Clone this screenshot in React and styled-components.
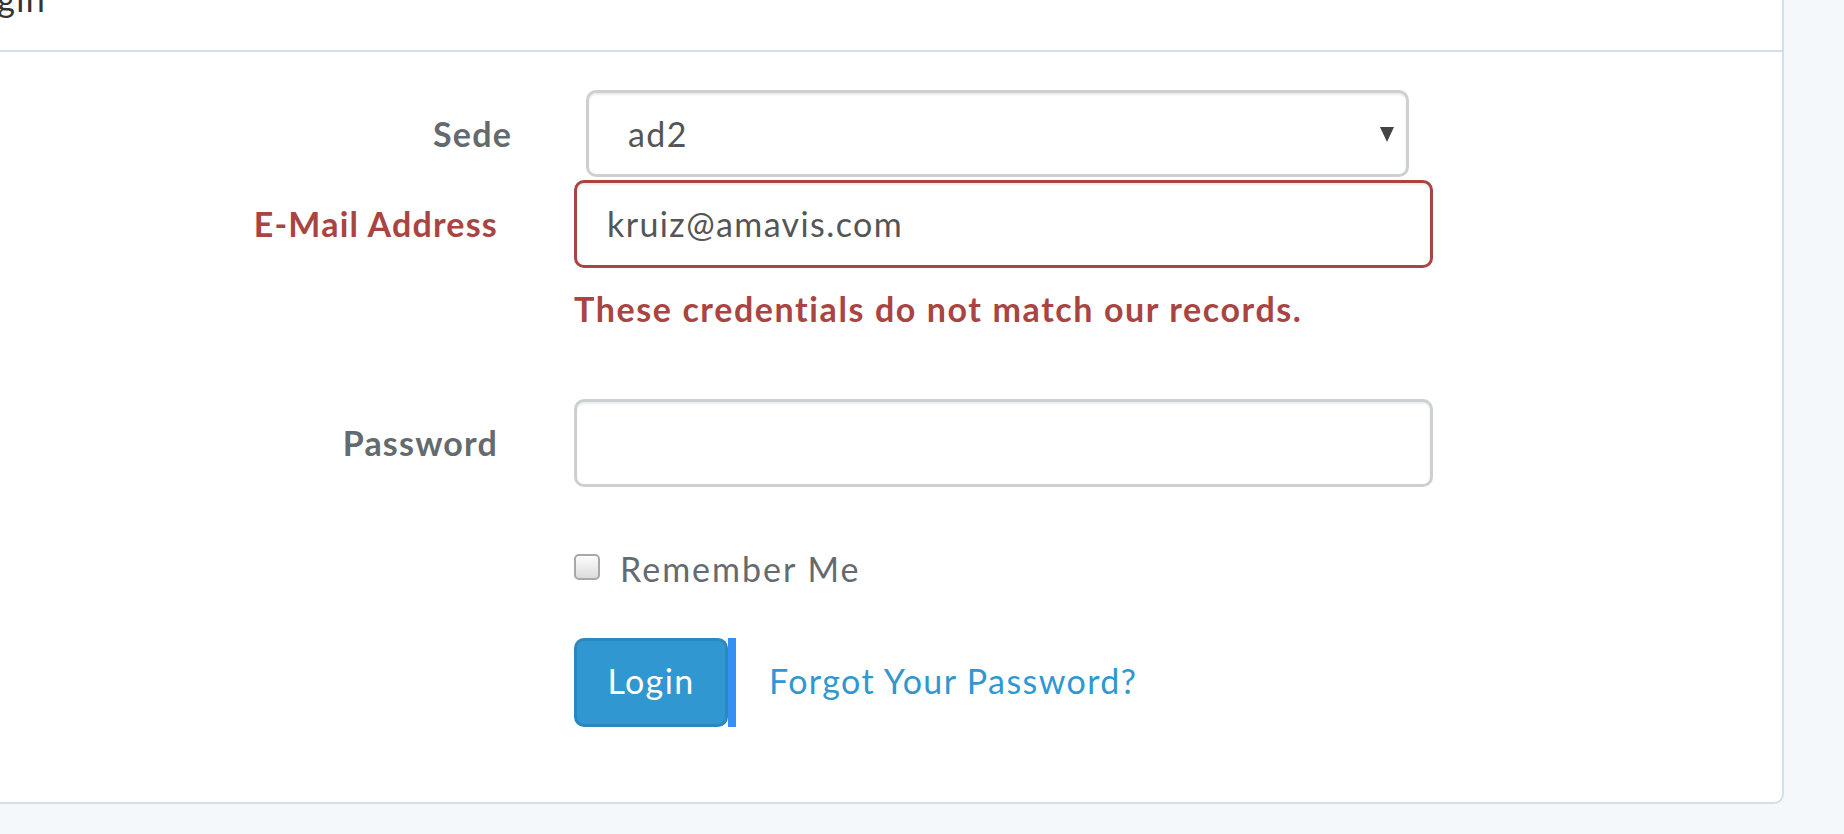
import styled, { createGlobalStyle } from "styled-components";

const GlobalStyle = createGlobalStyle`
  html, body {
    margin: 0;
    padding: 0;
    background: #f5f8fa;
    overflow: hidden;
  }
  body {
    font-family: Lato, "Liberation Sans", sans-serif;
    color: #636b6f;
    letter-spacing: 1.4px;
  }
  * { box-sizing: border-box; }
`;

const LABEL_COL = 539;
const COL_GAP = 76;

const Panel = styled.div`
  margin: -54px 0 0 -80px;
  width: 1864px;
  height: 858px;
  background: #fff;
  border: 2px solid #d3e0e9;
  border-radius: 10px;
`;

const PanelHeading = styled.div`
  padding: 24px 37px;
  font-size: 34px;
  line-height: 54px;
  color: #333;
  border-bottom: 2px solid #d3e0e9;
`;

const PanelBody = styled.div`
  padding: 38px 37px 37px 37px;
`;

const Row = styled.div`
  display: grid;
  grid-template-columns: ${p => p.labelWidth || LABEL_COL}px ${p => p.controlWidth || 859}px;
  column-gap: ${p => p.gap || COL_GAP}px;
  align-items: start;
  margin-bottom: ${p => p.mb || 0}px;
`;

const Label = styled.label`
  text-align: right;
  font-size: 34px;
  font-weight: 700;
  line-height: ${p => p.h || 88}px;
  letter-spacing: 1.2px;
  color: ${p => p.error ? '#a94442' : '#636b6f'};
`;

const Select = styled.div`
  position: relative;
  height: 87px;
  border: 3px solid #ccd0d2;
  border-radius: 10px;
  background: #fff;
  box-shadow: inset 0 2px 2px rgba(0, 0, 0, 0.075);
  padding-left: 39px;
  font-size: 34px;
  line-height: 81px;
  color: #555;

  &::after {
    content: "";
    position: absolute;
    right: 12px;
    top: 34px;
    border-left: 7px solid transparent;
    border-right: 7px solid transparent;
    border-top: 15px solid #444;
  }
`;

const Input = styled.div`
  height: 88px;
  border: 3px solid ${p => p.error ? '#a94442' : '#ccd0d2'};
  border-radius: 10px;
  background: #fff;
  box-shadow: inset 0 2px 2px rgba(0, 0, 0, 0.075);
  padding-left: 30px;
  font-size: 34px;
  line-height: 82px;
  color: #555;
`;

const HelpBlock = styled.div`
  margin-top: 14px;
  font-size: 34px;
  font-weight: 700;
  line-height: 54px;
  letter-spacing: 1.6px;
  color: #a94442;
`;

const CheckRow = styled.label`
  display: flex;
  align-items: center;
  gap: 20px;
  height: 54px;
  font-size: 34px;
  letter-spacing: 2px;
  color: #636b6f;
`;

const CheckText = styled.span`
  margin-top: -6px;
`;

const CheckBox = styled.span`
  width: 26px;
  height: 26px;
  margin-top: -8px;
  border: 2px solid #a8a8a8;
  border-radius: 5px;
  background: linear-gradient(#fcfcfc, #dcdcdc);
`;

const Actions = styled.div`
  display: flex;
  align-items: center;
`;

const Button = styled.button`
  width: 154px;
  height: 89px;
  background: #3097d1;
  border: 3px solid #2a88bd;
  border-radius: 10px;
  color: #fff;
  font-family: inherit;
  font-size: 34px;
  letter-spacing: 1.4px;
  padding: 0 0 4px 0;
`;

const FocusBar = styled.span`
  width: 8px;
  height: 89px;
  background: #3590f3;
`;

const LinkText = styled.a`
  margin-left: 33px;
  margin-top: -4px;
  font-size: 34px;
  color: #3097d1;
  text-decoration: none;
`;

const Empty = styled.div``;

export default function App() {
  return (
    <>
      <GlobalStyle />
      <Panel>
        <PanelHeading>Login</PanelHeading>
        <PanelBody>
          <Row labelWidth={553} controlWidth={823} gap={74} mb={3}>
            <Label h={87}>Sede</Label>
            <Select>ad2</Select>
          </Row>

          <Row mb={63}>
            <Label error>E-Mail Address</Label>
            <div>
              <Input error>kruiz@amavis.com</Input>
              <HelpBlock>These credentials do not match our records.</HelpBlock>
            </div>
          </Row>

          <Row mb={57}>
            <Label>Password</Label>
            <Input />
          </Row>

          <Row mb={40}>
            <Empty />
            <CheckRow>
              <CheckBox />
              <CheckText>Remember Me</CheckText>
            </CheckRow>
          </Row>

          <Row>
            <Empty />
            <Actions>
              <Button>Login</Button>
              <FocusBar />
              <LinkText href="#">Forgot Your Password?</LinkText>
            </Actions>
          </Row>
        </PanelBody>
      </Panel>
    </>
  );
}
